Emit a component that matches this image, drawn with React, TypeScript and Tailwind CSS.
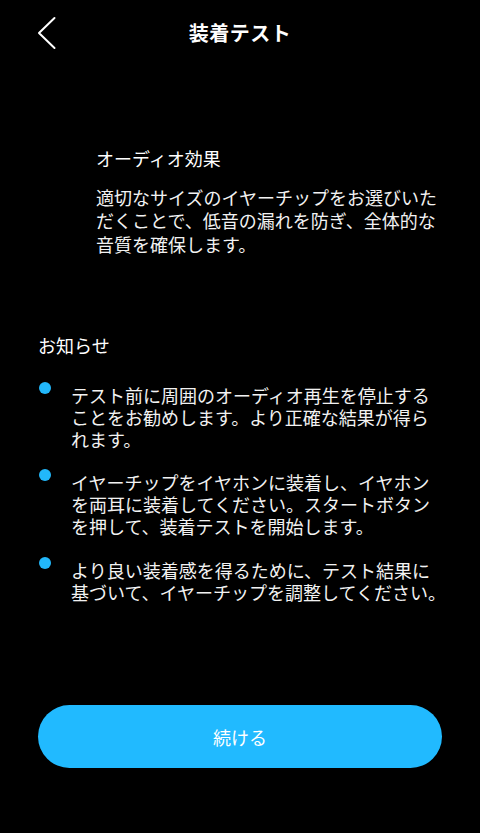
import React from 'react';

const notices: string[][] = [
  ['テスト前に周囲のオーディオ再生を停止する', 'ことをお勧めします。より正確な結果が得ら', 'れます。'],
  ['イヤーチップをイヤホンに装着し、イヤホン', 'を両耳に装着してください。スタートボタン', 'を押して、装着テストを開始します。'],
  ['より良い装着感を得るために、テスト結果に', '基づいて、イヤーチップを調整してください。'],
];

const intro = ['適切なサイズのイヤーチップをお選びいた', 'だくことで、低音の漏れを防ぎ、全体的な', '音質を確保します。'];

const Lines: React.FC<{ lines: string[] }> = ({ lines }) => (
  <>
    {lines.map((l, i) => (
      <span key={i} className="block whitespace-nowrap">
        {l}
      </span>
    ))}
  </>
);

export default function App() {
  return (
    <div
      className="w-[480px] h-[833px] bg-black text-white flex flex-col overflow-hidden"
      style={{ fontFamily: '"Noto Sans CJK JP", "Noto Sans", sans-serif' }}
    >
      {/* header */}
      <div className="h-[66px] grid grid-cols-[1fr_auto_1fr] items-center">
        <div className="pl-[37px] flex items-center">
          <svg width="20" height="34" viewBox="0 0 20 34" fill="none">
            <polyline points="17.5,2 2,17 17.5,32" stroke="#ffffff" strokeWidth="2" strokeLinecap="round" strokeLinejoin="round" />
          </svg>
        </div>
        <h1 className="text-[20px] leading-[24px] font-bold tracking-[0.5px]">装着テスト</h1>
        <div />
      </div>

      {/* audio effect */}
      <div className="mt-[80px] pl-[96px]">
        <h2 className="text-[18px] leading-[24px]">オーディオ効果</h2>
        <p className="mt-[16px] text-[18px] leading-[23.3px] text-[#f2f2f2]">
          <Lines lines={intro} />
        </p>
      </div>

      {/* notices */}
      <div className="mt-[77px] pl-[38px]">
        <h2 className="text-[18px] leading-[24px]">お知らせ</h2>
        <ul className="mt-[27px] flex flex-col gap-[21.5px]">
          {notices.map((n, i) => (
            <li key={i} className="flex items-start gap-[20px] pl-[1px]">
              <span className="mt-[-2px] w-[12px] h-[12px] rounded-full bg-[#22b8fb] shrink-0" />
              <div className="text-[18px] leading-[22px] text-[#f2f2f2]">
                <Lines lines={n} />
              </div>
            </li>
          ))}
        </ul>
      </div>

      {/* button */}
      <div className="mt-auto mb-[65px] px-[38px]">
        <button className="w-full h-[63px] rounded-full bg-[#21baff] text-white text-[18px] leading-[24px]">
          続ける
        </button>
      </div>
    </div>
  );
}
